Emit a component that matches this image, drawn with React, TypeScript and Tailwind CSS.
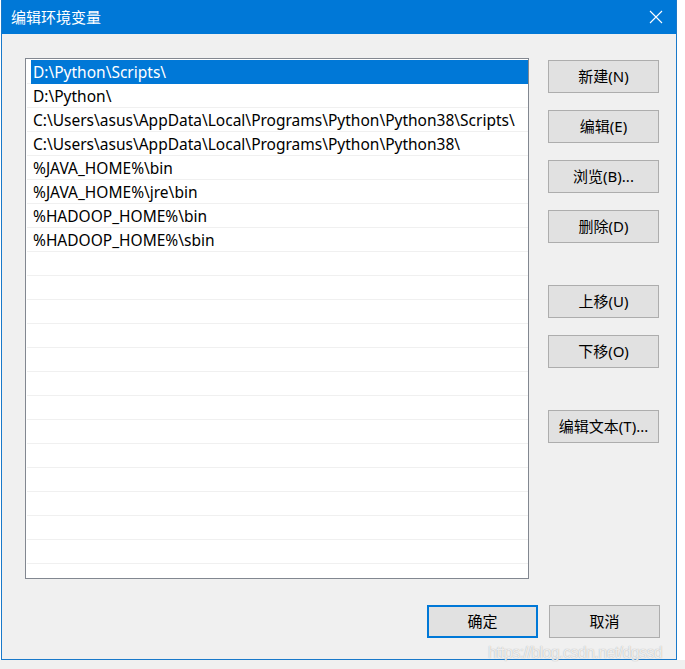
import React from "react";

const paths = [
  "D:\\Python\\Scripts\\",
  "D:\\Python\\",
  "C:\\Users\\asus\\AppData\\Local\\Programs\\Python\\Python38\\Scripts\\",
  "C:\\Users\\asus\\AppData\\Local\\Programs\\Python\\Python38\\",
  "%JAVA_HOME%\\bin",
  "%JAVA_HOME%\\jre\\bin",
  "%HADOOP_HOME%\\bin",
  "%HADOOP_HOME%\\sbin",
];

const font = { fontFamily: '"Noto Sans", "Noto Sans CJK SC", sans-serif' };

const SideButton = ({ label, className = "" }: { label: string; className?: string }) => (
  <button
    className={`w-[111px] h-[33px] bg-[#e1e1e1] border border-[#adadad] text-[15px] text-black leading-none ${className}`}
  >
    {label}
  </button>
);

export default function App() {
  const rows = Array.from({ length: 22 }, (_, i) => paths[i] ?? "");

  return (
    <div
      className="w-[685px] h-[669px] bg-[#f0f0f0] relative overflow-hidden"
      style={font}
    >
      <div className="flex h-[660px]">
        <div className="w-[1px] bg-white" />
        <div className="w-[676px] h-[660px] flex flex-col border-x border-b border-[#1979ca] bg-[#f0f0f0]">
          {/* title bar */}
          <div className="h-[34px] bg-[#0078d7] flex items-center justify-between pl-[9px] pr-[13px] shrink-0">
            <span className="text-white text-[15px]">编辑环境变量</span>
            <svg width="14" height="14" viewBox="0 0 14 14" className="mt-[-1px]">
              <path d="M1 1 L13 13 M13 1 L1 13" stroke="white" strokeWidth="1.1" />
            </svg>
          </div>

          <div className="flex pl-[23px] pt-[24px]">
            {/* list */}
            <div className="w-[504px] h-[521px] border border-[#828790] bg-white pt-[1px] overflow-hidden">
              {rows.map((p, i) => (
                <div key={i} className="ml-[1px] h-[24px] border-b border-[#f0f0f0]">
                  <div
                    className={`ml-[4px] h-[24px] pl-[2px] pt-[2px] flex items-center text-[15.5px] whitespace-nowrap ${
                      i === 0 ? "bg-[#0078d7] text-white" : "text-black"
                    }`}
                  >
                    {p}
                  </div>
                </div>
              ))}
            </div>

            {/* buttons */}
            <div className="flex flex-col pl-[19px] pt-[2px]">
              <SideButton label="新建(N)" />
              <SideButton label="编辑(E)" className="mt-[17px]" />
              <SideButton label="浏览(B)..." className="mt-[17px]" />
              <SideButton label="删除(D)" className="mt-[17px]" />
              <SideButton label="上移(U)" className="mt-[42px]" />
              <SideButton label="下移(O)" className="mt-[17px]" />
              <SideButton label="编辑文本(T)..." className="mt-[42px]" />
            </div>
          </div>

          <div className="flex justify-end gap-[11px] pr-[16px] mt-[26px]">
            <button className="w-[111px] h-[33px] bg-[#e1e1e1] border-2 border-[#0078d7] text-[15px] text-black">
              确定
            </button>
            <button className="w-[111px] h-[33px] bg-[#e1e1e1] border border-[#adadad] text-[15px] text-black">
              取消
            </button>
          </div>
        </div>
        <div className="flex-1 bg-white" />
      </div>

      <div
        className="absolute left-[488px] top-[641px] text-[16px] tracking-[-0.6px] text-white/80"
        style={{ fontFamily: '"Liberation Sans", sans-serif', textShadow: "0 0 1px #999" }}
      >
        https://blog.csdn.net/dgssd
      </div>
    </div>
  );
}
